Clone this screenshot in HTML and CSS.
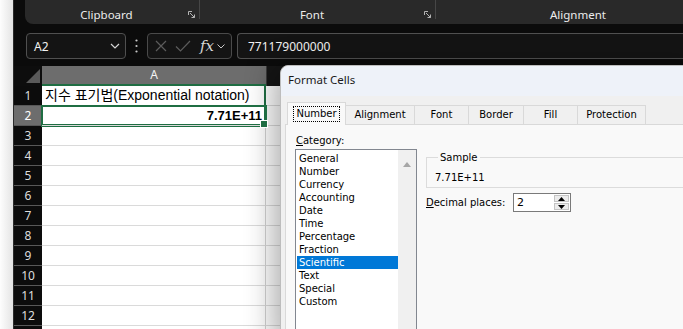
FILE: index.html
```html
<!DOCTYPE html>
<html lang="en">
<head>
	<meta charset="UTF-8">
	<title>Format Cells</title>
	<link rel="stylesheet" href="styles.css">
</head>
<body>
<div class="screen">
	<div class="desk"></div>
	<div class="excel">
		<div class="ribbon">
			<div class="group group-clip">
				<span class="group-name">Clipboard</span>
				<svg class="launcher" width="7" height="7" viewBox="0 0 7 7"><path d="M0.5 4V0.5H4M2 2L6.5 6.5M6.5 3.5V6.5H3.5" fill="none" stroke="#b4b4b4" stroke-width="1"/></svg>
			</div>
			<div class="sep"></div>
			<div class="group group-font">
				<span class="group-name">Font</span>
				<svg class="launcher" width="7" height="7" viewBox="0 0 7 7"><path d="M0.5 4V0.5H4M2 2L6.5 6.5M6.5 3.5V6.5H3.5" fill="none" stroke="#b4b4b4" stroke-width="1"/></svg>
			</div>
			<div class="sep"></div>
			<div class="group group-align">
				<span class="group-name">Alignment</span>
			</div>
		</div>

		<div class="formula-bar">
			<div class="name-box">
				<span>A2</span>
				<svg width="10" height="6" viewBox="0 0 10 6"><path d="M1 1l4 4 4-4" fill="none" stroke="#d6d6d6" stroke-width="1.2"/></svg>
			</div>
			<div class="grip">
				<svg width="3" height="14" viewBox="0 0 3 14"><circle cx="1.5" cy="1.5" r="1.1" fill="#c8c8c8"/><circle cx="1.5" cy="7" r="1.1" fill="#c8c8c8"/><circle cx="1.5" cy="12.5" r="1.1" fill="#c8c8c8"/></svg>
			</div>
			<div class="fx-box">
				<svg width="12" height="12" viewBox="0 0 12 12"><path d="M1 1L11 11M11 1L1 11" stroke="#5c5c5c" stroke-width="1.2"/></svg>
				<svg width="16" height="12" viewBox="0 0 16 12"><path d="M1 6.5l4.5 4.5L15 1" fill="none" stroke="#5c5c5c" stroke-width="1.2"/></svg>
				<span class="fx">fx</span>
				<svg width="8" height="5" viewBox="0 0 8 5"><path d="M0.5 0.5l3.5 3.5 3.5-3.5" fill="none" stroke="#c8c8c8" stroke-width="1"/></svg>
			</div>
			<div class="formula-input">771179000000</div>
		</div>

		<div class="sheet">
			<div class="row">
				<div class="corner"><div class="corner-tri"></div></div>
				<div class="col-head col-a">A</div>
				<div class="col-head col-b"></div>
			</div>
			<div class="row">
				<div class="row-num">1</div>
				<div class="cell cell-a a1">지수 표기법(Exponential notation)</div>
				<div class="cell cell-b"></div>
			</div>
			<div class="row">
				<div class="row-num active">2</div>
				<div class="cell cell-a a2">7.71E+11</div>
				<div class="cell cell-b"></div>
			</div>
			<div class="row"><div class="row-num">3</div><div class="cell cell-a"></div><div class="cell cell-b"></div></div>
			<div class="row"><div class="row-num">4</div><div class="cell cell-a"></div><div class="cell cell-b"></div></div>
			<div class="row"><div class="row-num">5</div><div class="cell cell-a"></div><div class="cell cell-b"></div></div>
			<div class="row"><div class="row-num">6</div><div class="cell cell-a"></div><div class="cell cell-b"></div></div>
			<div class="row"><div class="row-num">7</div><div class="cell cell-a"></div><div class="cell cell-b"></div></div>
			<div class="row"><div class="row-num">8</div><div class="cell cell-a"></div><div class="cell cell-b"></div></div>
			<div class="row"><div class="row-num">9</div><div class="cell cell-a"></div><div class="cell cell-b"></div></div>
			<div class="row"><div class="row-num">10</div><div class="cell cell-a"></div><div class="cell cell-b"></div></div>
			<div class="row"><div class="row-num">11</div><div class="cell cell-a"></div><div class="cell cell-b"></div></div>
			<div class="row"><div class="row-num">12</div><div class="cell cell-a"></div><div class="cell cell-b"></div></div>
			<div class="row"><div class="row-num"></div><div class="cell cell-a"></div><div class="cell cell-b"></div></div>
		</div>
	</div>

	<div class="dialog">
		<div class="dialog-title">Format Cells</div>
		<div class="dialog-body">
			<ul class="tabs">
				<li class="tab selected"><span class="focus">Number</span></li>
				<li class="tab tab-align">Alignment</li>
				<li class="tab tab-font">Font</li>
				<li class="tab tab-border">Border</li>
				<li class="tab tab-fill">Fill</li>
				<li class="tab tab-prot">Protection</li>
			</ul>
			<div class="tab-page">
				<div class="category">
					<div class="label"><u>C</u>ategory:</div>
					<div class="listbox">
						<ul class="items">
							<li>General</li>
							<li>Number</li>
							<li>Currency</li>
							<li>Accounting</li>
							<li>Date</li>
							<li>Time</li>
							<li>Percentage</li>
							<li>Fraction</li>
							<li class="chosen">Scientific</li>
							<li>Text</li>
							<li>Special</li>
							<li>Custom</li>
						</ul>
						<div class="scrollbar">
							<svg width="8" height="5" viewBox="0 0 8 5"><path d="M0 5L4 0 8 5z" fill="#a6a6a6"/></svg>
						</div>
					</div>
				</div>
				<div class="options">
					<fieldset class="sample">
						<legend>Sample</legend>
						<div class="sample-value">7.71E+11</div>
					</fieldset>
					<div class="decimals">
						<span class="label"><u>D</u>ecimal places:</span>
						<div class="spin">
							<span class="spin-value">2</span>
							<div class="spin-btns">
								<div class="spin-btn"><svg width="7" height="4" viewBox="0 0 7 4"><path d="M0 4L3.5 0 7 4z" fill="#000"/></svg></div>
								<div class="spin-btn"><svg width="7" height="4" viewBox="0 0 7 4"><path d="M0 0L3.5 4 7 0z" fill="#000"/></svg></div>
							</div>
						</div>
					</div>
				</div>
			</div>
		</div>
	</div>
</div>
</body>
</html>
```

FILE: styles.css
```css
* {
	margin: 0;
	padding: 0;
	box-sizing: border-box;
}

body {
	background: #0b0b0b;
	font-family: "Noto Sans", "Liberation Sans", sans-serif;
}

.screen {
	position: relative;
	display: flex;
	width: 683px;
	height: 329px;
	overflow: hidden;
}

.desk {
	width: 13px;
	flex-shrink: 0;
	background: linear-gradient(to right, #fdfdfd, #e4e4e4);
}

.excel {
	flex: 1;
	background: #0b0b0b;
	border-left: 1px solid #2c2c2c;
}

/* ribbon */
.ribbon {
	display: flex;
	height: 24px;
	margin-left: 11px;
	background: #292929;
	border-bottom-left-radius: 8px;
}

.group {
	display: flex;
	align-items: center;
	height: 24px;
	padding-top: 5px;
	color: #ececec;
	font-size: 11.5px;
}

.group-name {
	flex: 1;
	text-align: center;
}

.launcher {
	margin-right: 4px;
}

.group-clip {
	width: 174px;
}

.group-font {
	width: 235px;
}

.group-align {
	width: 284px;
}

.sep {
	width: 1px;
	height: 19px;
	background: #464646;
}

/* formula bar */
.formula-bar {
	display: flex;
	height: 26px;
	margin-top: 9px;
	color: #f2f2f2;
	font-size: 12px;
}

.name-box {
	display: flex;
	align-items: center;
	justify-content: space-between;
	width: 100px;
	margin-left: 12px;
	padding: 0 5px 0 7px;
	border: 1px solid #505050;
	border-radius: 4px;
	background: #141414;
}

.grip {
	display: flex;
	align-items: center;
	justify-content: center;
	width: 21px;
}

.fx-box {
	display: flex;
	align-items: center;
	width: 85px;
	padding-left: 7px;
	border: 1px solid #4a4a4a;
	border-radius: 4px;
	background: #141414;
	gap: 8px;
}

.fx {
	margin-left: 1px;
	font-family: "DejaVu Serif", "Liberation Serif", serif;
	font-style: italic;
	font-size: 15px;
	color: #d8d8d8;
	margin-right: -5px;
}

.formula-input {
	flex: 1;
	display: flex;
	align-items: center;
	margin-left: 5px;
	padding-left: 10px;
	border: 1px solid #505050;
	border-right: none;
	border-radius: 4px 0 0 4px;
	background: #141414;
}

/* sheet */
.sheet {
	margin-top: 7px;
}

.row {
	display: flex;
	height: 20px;
}

.corner {
	position: relative;
	width: 28px;
	background: #0d0d0d;
}

.corner-tri {
	position: absolute;
	right: 2px;
	bottom: 3px;
	width: 0;
	height: 0;
	border-left: 14px solid transparent;
	border-bottom: 14px solid #5a5a5a;
}

.col-head {
	font-size: 12px;
	line-height: 18px;
	text-align: center;
}

.col-a {
	width: 224px;
	background: #6d6d6d;
	color: #f4f4f4;
	border-bottom: 2px solid #1f6e43;
}

.col-b {
	flex: 1;
	background: #151515;
	border-left: 1px solid #3a3a3a;
}

.row-num {
	width: 28px;
	background: #0c0c0c;
	color: #dedede;
	font-size: 12px;
	line-height: 19px;
	text-align: center;
	border-bottom: 1px solid #585858;
}

.row-num.active {
	background: #6d6d6d;
	color: #ffffff;
}

.cell {
	background: #ffffff;
	border-bottom: 1px solid #dadada;
}

.cell-a {
	width: 224px;
	border-right: 1px solid #d2d2d2;
}

.cell-b {
	flex: 1;
}

.a1 {
	padding-left: 3px;
	font-family: "Liberation Sans", "Noto Sans CJK KR", sans-serif;
	font-size: 14px;
	line-height: 19px;
	color: #000000;
	white-space: nowrap;
	border-right: 1px solid #1f6e43;
	box-shadow: inset -1px 0 0 #1f6e43;
}

.a2 {
	position: relative;
	z-index: 1;
	padding-right: 3px;
	font-family: "Liberation Sans", sans-serif;
	font-weight: bold;
	font-size: 13px;
	line-height: 19px;
	text-align: right;
	color: #000000;
	border-right-color: #1f6e43;
	box-shadow: 0 0 0 1px #1f6e43, inset 0 0 0 1px #1f6e43;
}

.a2::after {
	content: "";
	position: absolute;
	right: -3px;
	bottom: -3px;
	width: 6px;
	height: 6px;
	background: #1f6e43;
	border: 1px solid #ffffff;
}

/* dialog */
.dialog {
	position: absolute;
	left: 280px;
	top: 65px;
	width: 420px;
	height: 280px;
	background: #f0f0f0;
	border: 1px solid #bdbdbd;
	border-radius: 8px 0 0 0;
	box-shadow: -8px 0 28px rgba(0, 0, 0, 0.3);
	font-family: "DejaVu Sans", sans-serif;
	font-size: 10px;
	color: #000000;
}

.dialog-title {
	height: 30px;
	padding-left: 7px;
	background: #eef2f9;
	border-radius: 8px 0 0 0;
	font-family: "Noto Sans", sans-serif;
	font-size: 11.5px;
	line-height: 28px;
	color: #1a1a1a;
}

.dialog-body {
	padding: 6px 0 0 4px;
}

.tabs {
	list-style: none;
	display: flex;
	align-items: flex-end;
	height: 22px;
	margin-left: 2px;
	position: relative;
	z-index: 1;
}

.tab {
	height: 19px;
	line-height: 18px;
	text-align: center;
	background: #f0f0f0;
	border: 1px solid #d9d9d9;
	border-bottom: none;
	border-left: none;
}

.tab.selected {
	width: 59px;
	height: 23px;
	padding-top: 3px;
	line-height: 14px;
	background: #f9f9f9;
	border-left: 1px solid #d9d9d9;
	margin-bottom: -1px;
}

.focus {
	display: inline-block;
	padding: 0 2px;
	border: 1px dotted #000000;
	line-height: 14px;
}

.tab-align { width: 69px; }
.tab-font { width: 54px; }
.tab-border { width: 55px; }
.tab-fill { width: 54px; }
.tab-prot { width: 68px; }

.tab-page {
	display: flex;
	height: 220px;
	padding-left: 9px;
	background: #f9f9f9;
	border: 1px solid #d9d9d9;
}

.category {
	width: 122px;
}

.category .label {
	margin-top: 9px;
	padding-left: 1px;
	line-height: 13px;
}

.listbox {
	display: flex;
	height: 200px;
	margin-top: 2px;
	background: #ffffff;
	border: 1px solid #828790;
}

.items {
	list-style: none;
	flex: 1;
	padding: 2px 0 0 1px;
}

.items li {
	padding-left: 2px;
	line-height: 13px;
	white-space: nowrap;
}

.items li.chosen {
	background: #0078d7;
	color: #ffffff;
}

.scrollbar {
	width: 18px;
	padding: 8px 0 0 5px;
	background: #f0f0f0;
}

.options {
	flex: 1;
	margin-left: 9px;
	padding-top: 26px;
}

.sample {
	height: 37px;
	padding-left: 8px;
	border: 1px solid #dcdcdc;
	border-right: none;
}

.sample legend {
	margin-left: 3px;
	padding: 0 2px;
	line-height: 13px;
}

.sample-value {
	margin-top: 7px;
	line-height: 13px;
}

.decimals {
	display: flex;
	align-items: center;
	margin-top: 5px;
}

.decimals .label {
	width: 87px;
}

.spin {
	display: flex;
	width: 58px;
	height: 19px;
	background: #ffffff;
	border: 1px solid #7a7a7a;
}

.spin-value {
	flex: 1;
	padding-left: 3px;
	font-size: 11px;
	line-height: 17px;
}

.spin-btns {
	display: flex;
	flex-direction: column;
	justify-content: center;
	gap: 1px;
	width: 16px;
	padding: 1px 1px 1px 0;
}

.spin-btn {
	display: flex;
	align-items: center;
	justify-content: center;
	height: 7px;
	background: #ececec;
	border: 1px solid #c4c4c4;
}
```
